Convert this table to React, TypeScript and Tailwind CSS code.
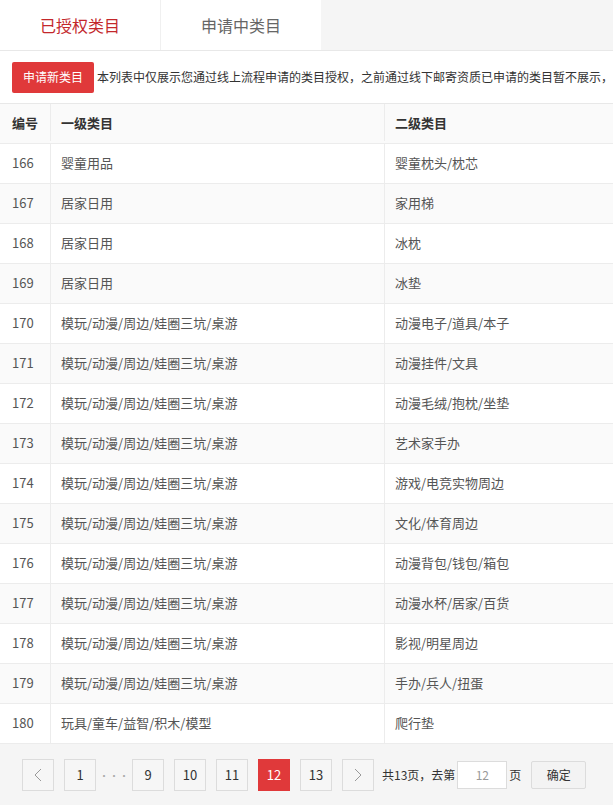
import React from "react";

const rows: [number, string, string][] = [
  [166, "婴童用品", "婴童枕头/枕芯"],
  [167, "居家日用", "家用梯"],
  [168, "居家日用", "冰枕"],
  [169, "居家日用", "冰垫"],
  [170, "模玩/动漫/周边/娃圈三坑/桌游", "动漫电子/道具/本子"],
  [171, "模玩/动漫/周边/娃圈三坑/桌游", "动漫挂件/文具"],
  [172, "模玩/动漫/周边/娃圈三坑/桌游", "动漫毛绒/抱枕/坐垫"],
  [173, "模玩/动漫/周边/娃圈三坑/桌游", "艺术家手办"],
  [174, "模玩/动漫/周边/娃圈三坑/桌游", "游戏/电竞实物周边"],
  [175, "模玩/动漫/周边/娃圈三坑/桌游", "文化/体育周边"],
  [176, "模玩/动漫/周边/娃圈三坑/桌游", "动漫背包/钱包/箱包"],
  [177, "模玩/动漫/周边/娃圈三坑/桌游", "动漫水杯/居家/百货"],
  [178, "模玩/动漫/周边/娃圈三坑/桌游", "影视/明星周边"],
  [179, "模玩/动漫/周边/娃圈三坑/桌游", "手办/兵人/扭蛋"],
  [180, "玩具/童车/益智/积木/模型", "爬行垫"],
];

const font = { fontFamily: '"Noto Sans CJK SC", "Noto Sans", sans-serif' };

function Chevron({ dir }: { dir: "l" | "r" }) {
  return (
    <svg width="8" height="14" viewBox="0 0 8 14" fill="none">
      {dir === "l" ? (
        <polyline points="7,1 1,7 7,13" stroke="#999" strokeWidth="1" />
      ) : (
        <polyline points="1,1 7,7 1,13" stroke="#999" strokeWidth="1" />
      )}
    </svg>
  );
}

function PageBtn({ children, active }: { children: React.ReactNode; active?: boolean }) {
  return (
    <div
      className={
        active
          ? "w-[32px] h-[32px] flex items-center justify-center bg-[#e0393a] text-white text-[13px] border border-[#e0393a]"
          : "w-[32px] h-[32px] flex items-center justify-center bg-[#f6f6f6] text-[#333] text-[13px] border border-[#dcdcdc]"
      }
    >
      {children}
    </div>
  );
}

export default function App() {
  return (
    <div className="w-[613px] h-[805px] overflow-hidden bg-[#f5f5f5]" style={font}>
      <div className="flex h-[51px] border-b border-[#e8e8e8]">
        <div className="w-[160px] h-full bg-white flex items-center justify-center text-[16px] text-[#c3272b]">
          已授权类目
        </div>
        <div className="w-[161px] h-full bg-white flex items-center justify-center text-[16px] text-[#666] border-l border-[#f0f0f0]">
          申请中类目
        </div>
        <div className="flex-1" />
      </div>
      <div className="bg-white h-[53px] flex items-center pl-[12px] border-b border-[#e8e8e8] whitespace-nowrap overflow-hidden">
        <div className="h-[31px] w-[82px] shrink-0 rounded-[2px] bg-[#e0393a] text-white text-[12px] flex items-center justify-center">
          申请新类目
        </div>
        <div className="ml-[3px] text-[12px] text-[#333]">
          本列表中仅展示您通过线上流程申请的类目授权，之前通过线下邮寄资质已申请的类目暂不展示，
        </div>
      </div>
      <div className="bg-white">
        <div className="flex h-[40px] bg-[#fafafa] border-b border-[#ececec] text-[13px] font-semibold text-[#333] pb-[2px]">
          <div className="w-[51px] shrink-0 flex items-center pl-[12px] border-r border-[#ececec]">编号</div>
          <div className="w-[334px] shrink-0 flex items-center pl-[10px] border-r border-[#ececec]">一级类目</div>
          <div className="flex-1 flex items-center pl-[10px]">二级类目</div>
        </div>
        {rows.map(([id, a, b], i) => (
          <div
            key={id}
            className={
              (i % 2 === 1 ? "bg-[#fafafa] " : "bg-white ") +
              "flex h-[40px] border-b border-[#ececec] text-[13px] text-[#555]"
            }
          >
            <div className="w-[51px] shrink-0 flex items-center pl-[12px] pb-[2px] border-r border-[#ececec]">{id}</div>
            <div className="w-[334px] shrink-0 flex items-center pl-[10px] pb-[2px] border-r border-[#ececec]">{a}</div>
            <div className="flex-1 flex items-center pl-[10px] pb-[2px]">{b}</div>
          </div>
        ))}
      </div>
      <div className="flex items-center pl-[22px] pt-[15px] text-[12px] text-[#333]">
        <PageBtn>
          <Chevron dir="l" />
        </PageBtn>
        <div className="ml-[10px]">
          <PageBtn>1</PageBtn>
        </div>
        <div className="w-[36px] text-center text-[#aaa] text-[10px]">···</div>
        <div className="flex gap-[10px]">
          <PageBtn>9</PageBtn>
          <PageBtn>10</PageBtn>
          <PageBtn>11</PageBtn>
          <PageBtn active>12</PageBtn>
          <PageBtn>13</PageBtn>
          <PageBtn>
            <Chevron dir="r" />
          </PageBtn>
        </div>
        <div className="ml-[8px]">共13页，去第</div>
        <div className="ml-[2px] w-[50px] h-[28px] bg-white border border-[#dcdcdc] flex items-center justify-center text-[#999]">
          12
        </div>
        <div className="ml-[2px]">页</div>
        <div className="ml-[10px] w-[55px] h-[28px] bg-[#f3f3f3] border border-[#dcdcdc] rounded-[2px] flex items-center justify-center">
          确定
        </div>
      </div>
    </div>
  );
}
